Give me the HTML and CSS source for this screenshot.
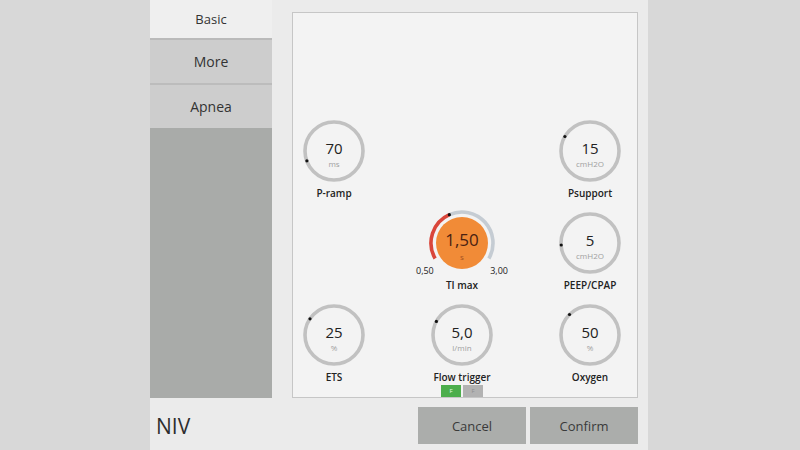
FILE: index.html
```html
<!DOCTYPE html>
<html>
<head>
<meta charset="utf-8">
<link rel="stylesheet" href="styles.css">
</head>
<body>
<div class="panel">
  <nav class="tabs">
    <div class="tab active">Basic</div>
    <div class="tab">More</div>
    <div class="tab">Apnea</div>
    <div class="tab-fill"></div>
  </nav>
  <section class="box">
    <div class="dials">
      <div class="item">
        <div class="dial">
          <svg width="62" height="62" viewBox="0 0 62 62"><circle class="ring" cx="31" cy="31" r="29"/><circle class="dot" cx="3.9" cy="40.8" r="1.6"/></svg>
          <div class="readout"><span class="val">70</span><span class="unit">ms</span></div>
        </div>
        <div class="label">P-ramp</div>
      </div>
      <div class="item"></div>
      <div class="item">
        <div class="dial">
          <svg width="62" height="62" viewBox="0 0 62 62"><circle class="ring" cx="31" cy="31" r="29"/><circle class="dot" cx="5.9" cy="16.5" r="1.6"/></svg>
          <div class="readout"><span class="val">15</span><span class="unit">cmH2O</span></div>
        </div>
        <div class="label">Psupport</div>
      </div>

      <div class="item"></div>
      <div class="item">
        <div class="dial active-dial">
          <svg class="big" width="72" height="72" viewBox="0 0 72 72">
            <path class="arc-red" d="M9.15 51.5 A31 31 0 0 1 23.4 7.7"/>
            <path class="arc-rest" d="M23.4 7.7 A31 31 0 0 1 62.85 51.5"/>
            <circle class="fill" cx="36" cy="36" r="26"/>
            <circle class="dot" cx="23.4" cy="7.7" r="1.6"/>
          </svg>
          <div class="readout hot"><span class="val">1,50</span><span class="unit">s</span></div>
          <span class="range min">0,50</span>
          <span class="range max">3,00</span>
        </div>
        <div class="label">TI max</div>
      </div>
      <div class="item">
        <div class="dial">
          <svg width="62" height="62" viewBox="0 0 62 62"><circle class="ring" cx="31" cy="31" r="29"/><circle class="dot" cx="2.2" cy="33" r="1.6"/></svg>
          <div class="readout"><span class="val">5</span><span class="unit">cmH2O</span></div>
        </div>
        <div class="label">PEEP/CPAP</div>
      </div>

      <div class="item">
        <div class="dial">
          <svg width="62" height="62" viewBox="0 0 62 62"><circle class="ring" cx="31" cy="31" r="29"/><circle class="dot" cx="7" cy="14.8" r="1.6"/></svg>
          <div class="readout"><span class="val">25</span><span class="unit">%</span></div>
        </div>
        <div class="label">ETS</div>
      </div>
      <div class="item">
        <div class="dial">
          <svg width="62" height="62" viewBox="0 0 62 62"><circle class="ring" cx="31" cy="31" r="29"/><circle class="dot" cx="5.4" cy="17.4" r="1.6"/></svg>
          <div class="readout"><span class="val">5,0</span><span class="unit">l/min</span></div>
        </div>
        <div class="label">Flow trigger</div>
        <div class="badges"><span class="badge on">F</span><span class="badge off">F</span></div>
      </div>
      <div class="item">
        <div class="dial">
          <svg width="62" height="62" viewBox="0 0 62 62"><circle class="ring" cx="31" cy="31" r="29"/><circle class="dot" cx="10.5" cy="10.5" r="1.6"/></svg>
          <div class="readout"><span class="val">50</span><span class="unit">%</span></div>
        </div>
        <div class="label">Oxygen</div>
      </div>
    </div>
  </section>
  <footer class="footer">
    <span class="mode">NIV</span>
    <div class="buttons">
      <button class="btn">Cancel</button>
      <button class="btn">Confirm</button>
    </div>
  </footer>
</div>
</body>
</html>
```

FILE: styles.css
```css
html, body {
  margin: 0;
  padding: 0;
}
body {
  background: #d8d8d8;
  font-family: "Open Sans", "DejaVu Sans", sans-serif;
  color: #2a2a2a;
  width: 800px;
  height: 450px;
  overflow: hidden;
}
.panel {
  margin-left: 150px;
  width: 498px;
  height: 450px;
  background: #ebebeb;
  display: grid;
  grid-template-columns: 122px 346px;
  grid-template-rows: 398px 52px;
  column-gap: 20px;
  padding-right: 10px;
  box-sizing: border-box;
}
.tabs {
  display: flex;
  flex-direction: column;
}
.tab {
  height: 43px;
  display: flex;
  align-items: center;
  justify-content: center;
  font-size: 14px;
  color: #333;
  background: #cdcdcd;
  border-bottom: 2px solid #bcbcbc;
  box-sizing: border-box;
}
.tab.active {
  height: 40px;
  background: #efefef;
  font-size: 13px;
  border-bottom: 2px solid #bababa;
}
.tab:nth-child(2) {
  height: 45px;
}
.tab:nth-child(3) {
  border-bottom: none;
}
.tab-fill {
  flex: 1;
  background: #a9aba9;
}
.box {
  margin-top: 12px;
  background: #f3f3f3;
  border: 1px solid #c6c6c6;
  box-sizing: border-box;
}
.dials {
  display: grid;
  grid-template-columns: repeat(3, 82px);
  grid-template-rows: repeat(3, 92px);
  column-gap: 46px;
  padding-top: 107px;
}
.item {
  display: flex;
  flex-direction: column;
  align-items: center;
}
.dial {
  display: grid;
  place-items: center;
  width: 62px;
  height: 62px;
  position: relative;
}
.dial > svg, .dial > .readout {
  grid-area: 1 / 1;
}
.dial svg.big {
  margin: -5px;
}
.ring {
  fill: none;
  stroke: #c1c1c1;
  stroke-width: 3.6;
}
.dot {
  fill: #111;
}
.arc-red {
  fill: none;
  stroke: #d9463b;
  stroke-width: 3.6;
}
.arc-rest {
  fill: none;
  stroke: #c5ccd3;
  stroke-width: 3.6;
}
.fill {
  fill: #f18b37;
}
.readout {
  display: flex;
  flex-direction: column;
  align-items: center;
  padding-top: 4px;
}
.val {
  font-size: 15px;
  line-height: 20px;
  color: #222;
}
.unit {
  font-size: 8px;
  line-height: 11px;
  color: #a0a0a0;
}
.hot .val {
  font-size: 17px;
  line-height: 23px;
  color: #4a2212;
}
.hot .unit {
  color: #a45222;
}
.range {
  position: absolute;
  top: 53px;
  font-size: 9px;
  line-height: 12px;
  color: #222;
}
.range.min {
  left: -15px;
}
.range.max {
  right: -15px;
}
.label {
  margin-top: 4px;
  font-size: 10px;
  line-height: 14px;
  font-weight: 600;
  color: #222;
}
.badges {
  display: flex;
  gap: 2px;
  margin-top: 1px;
}
.badge {
  width: 20px;
  height: 12px;
  font-size: 6px;
  line-height: 12px;
  text-align: center;
}
.badge.on {
  background: #4cae4c;
  color: #e6ffe6;
}
.badge.off {
  background: #b2b2b2;
  color: #8e8e8e;
}
.footer {
  grid-column: 1 / -1;
  display: flex;
  align-items: center;
  padding-top: 3px;
}
.mode {
  padding-left: 6px;
  font-size: 21px;
  color: #2e2e2e;
}
.buttons {
  margin-left: auto;
  display: flex;
  gap: 4px;
}
.btn {
  width: 108px;
  height: 37px;
  border: none;
  background: #abadab;
  font-family: "Open Sans", "DejaVu Sans", sans-serif;
  font-size: 13px;
  color: #3a3a3a;
  padding: 0;
}
```
